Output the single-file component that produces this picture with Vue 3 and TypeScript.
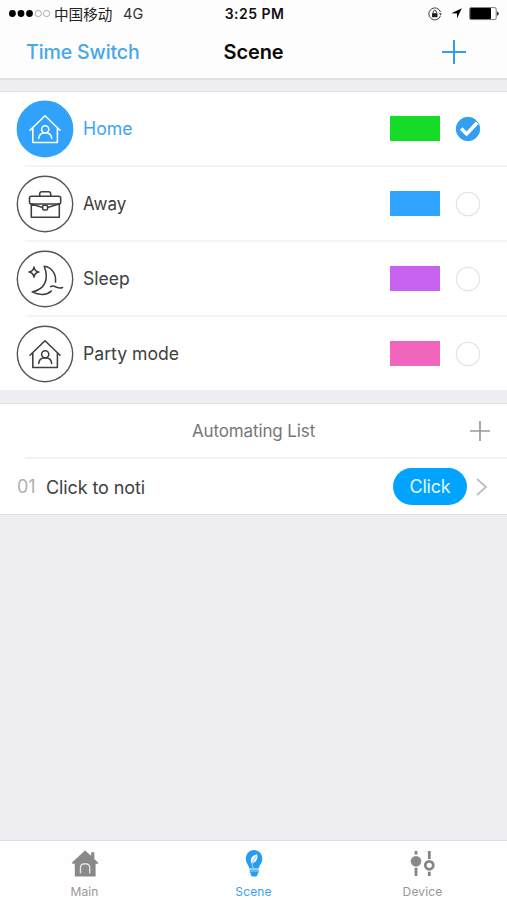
<script setup lang="ts">
import { ref } from 'vue'

type SceneIcon = 'house' | 'case' | 'moon'
interface Scene {
  name: string
  icon: SceneIcon
  color: string
  textWidth: number
}

const scenes: Scene[] = [
  { name: 'Home', icon: 'house', color: '#14dc28', textWidth: 49.5 },
  { name: 'Away', icon: 'case', color: '#30a4ff', textWidth: 43.3 },
  { name: 'Sleep', icon: 'moon', color: '#c863ef', textWidth: 46.7 },
  { name: 'Party mode', icon: 'house', color: '#f165bd', textWidth: 96 },
]
const selected = ref(0)
</script>

<template>
  <div class="screen">
    <header class="top">
      <div class="status">
        <div class="carrier">
          <svg width="42" height="10" viewBox="0 0 42 10">
            <circle cx="3.4" cy="4.5" r="3.4" />
            <circle cx="12" cy="4.5" r="3.4" />
            <circle cx="20.5" cy="4.5" r="3.4" />
            <circle cx="29.3" cy="4.5" r="3.1" class="hollow" />
            <circle cx="37.6" cy="4.5" r="3.1" class="hollow" />
          </svg>
          <span class="operator">中国移动</span>
          <span class="network">4G</span>
        </div>
        <span class="clock">3:25 PM</span>
        <div class="indicators">
          <svg width="14" height="14" viewBox="0 0 14 14" fill="none" stroke="#444">
            <path d="M12.5 8.8A6 6 0 1 1 12.5 5" />
            <path d="m11 6.2 2.7.1-1.1 2.2z" fill="#333" stroke="none" />
            <rect x="4" y="6.2" width="5.5" height="4" fill="#222" stroke="none" />
            <path d="M5.2 6.4V5a1.6 1.6 0 0 1 3.2 0v1.4" />
          </svg>
          <svg class="arrow" width="11" height="11" viewBox="0 0 11 11">
            <path d="M10.8.2 6 10.6V5.4L.4 5.2z" />
          </svg>
          <svg width="31" height="14" viewBox="0 0 31 14">
            <rect x=".6" y=".6" width="26.6" height="12" rx="1.5" fill="#fff" stroke="#555" stroke-width=".8" />
            <rect x="1.2" y="1.1" width="20.8" height="11" rx=".8" />
            <path d="M28.2 4.2q3 2.3 0 4.8z" />
          </svg>
        </div>
      </div>
      <nav class="navigation">
        <button class="switch">Time Switch</button>
        <h1>Scene</h1>
        <button class="add" aria-label="Add scene">
          <svg width="24" height="24" viewBox="0 0 24 24"><path d="M12 0v24M0 12h24" /></svg>
        </button>
      </nav>
    </header>

    <main>
      <section class="scenes">
        <div
          v-for="(scene, index) in scenes"
          :key="scene.name"
          class="scene"
          :class="{ selected: selected === index }"
          @click="selected = index"
        >
          <svg class="scene-icon" width="58" height="58" viewBox="0 0 58 58">
            <circle class="disc" cx="29" cy="29" r="27.7" />
            <g v-if="scene.icon === 'house'">
              <path d="m14 30.3 15-14.6 15 14.6M16.8 28v14.5h24.6V28" />
              <circle cx="29.2" cy="29.3" r="3.6" />
              <path d="M22.7 38.4c.4-3.8 2.7-5.7 6.5-5.7s6.1 1.9 6.5 5.7" />
            </g>
            <g v-else-if="scene.icon === 'case'">
              <rect x="13.5" y="21.2" width="31.2" height="7.7" rx="2" />
              <path d="M23.7 21v-2.1q0-2.2 2.2-2.2h6.6q2.2 0 2.2 2.2V21M15.3 29v13.2h28V29M14.5 28.7l12.2 3.7M43.8 28.7l-12.2 3.7" />
              <rect class="clasp" x="26.7" y="30.2" width="4.8" height="4.8" rx="1.3" />
            </g>
            <g v-else>
              <path d="M18 17.1q.7 4.2 4.8 4.9-4.1.8-4.8 5-.8-4.2-5-5 4.2-.7 5-4.9z" />
              <path d="M28.2 16.2c7.8.8 12.2 8.4 11.3 15.9M28.2 16.2c5 12.7 1 23.3-12.1 25.7 7.2 3.7 14.9 3.3 19.1-.8M34.6 36.6c4.2-2.5 6.5 3.2 12 .9" />
            </g>
          </svg>
          <svg class="scene-name" width="110" height="26">
            <text x="0" y="19" :textLength="scene.textWidth" lengthAdjust="spacingAndGlyphs">{{ scene.name }}</text>
          </svg>
          <span class="swatch" :style="{ backgroundColor: scene.color }" />
          <svg class="choice" width="26" height="26" viewBox="0 0 26 26">
            <circle cx="13" cy="13" r="11.7" />
            <path v-if="selected === index" d="m6.2 12.5 5.4 5.4L22.2 6.8" />
          </svg>
        </div>
      </section>

      <section class="automation">
        <div class="automation-title">
          <h2>Automating List</h2>
          <svg width="20" height="20" viewBox="0 0 20 20"><path d="M10 0v20M0 10h20" /></svg>
        </div>
        <div class="automation-item">
          <span class="number">01</span>
          <span class="description">Click to noti</span>
          <button>Click</button>
          <svg width="11" height="18" viewBox="0 0 11 18"><path d="m1 1 9 8-9 8" /></svg>
        </div>
      </section>
    </main>

    <footer>
      <div class="tab">
        <svg width="28" height="30" viewBox="0 0 28 30">
          <path class="solid" d="M14 1.5.7 13.7l1 1.1h2.1v12.7h20.8V14.8h2.2l.7-.9-4.2-4V3.3h-3.1v3.4z" />
          <path class="door" d="M9.5 24.5v-6q0-3.8 4.6-3.8t4.6 3.8v6" />
        </svg>
        <span>Main</span>
      </div>
      <div class="tab active">
        <svg width="28" height="30" viewBox="0 0 28 30">
          <path class="solid" d="M9.3 19.6c0-3-3.4-5-3.4-9.8C5.9 4.5 9.3 1 14 1s8.3 3.5 8.3 8.8c0 4.7-3.4 6.8-3.5 9.8z" />
          <path class="solid" d="M9.7 20.5h8.9v3.2l-1.3 1.1.7.7-1.8 2.1h-4l-1.9-2.2.8-.8-1.4-1z" />
          <path class="leaf" d="M17.2 5.2c-5 .9-7.7 4.4-5.8 9 5-.7 6.7-4.4 5.8-9z" />
          <path class="stem" d="M16.2 7.3 12 13.7l1.1 5.8M10 22h8" />
        </svg>
        <span>Scene</span>
      </div>
      <div class="tab">
        <svg class="sliders" width="28" height="30" viewBox="0 0 28 30">
          <path d="M7 2v3.5M7 18.8v8.1M20.3 2v8M20.3 22.8v4.1" />
          <circle class="solid" cx="7" cy="12.2" r="5.3" />
          <circle cx="20.3" cy="16.3" r="4" />
        </svg>
        <span>Device</span>
      </div>
    </footer>
  </div>
</template>

<style>
body { background: #eeedf2; }
</style>

<style scoped>
.screen {
  display: flex;
  flex-direction: column;
  width: 507px;
  height: 900px;
  overflow: hidden;
  background: #eeedf2;
  font-family: Inter, "Noto Sans CJK SC", sans-serif;
  color: #404040;
}
.screen * { box-sizing: border-box; }
button { padding: 0; border: 0; background: none; font: inherit; cursor: pointer; }
svg { display: block; flex: none; }
.top { height: 80px; background: #fdfdfd; border-bottom: 2px solid #e0e0e2; }
.status {
  display: grid;
  grid-template-columns: 1fr 80px 1fr;
  align-items: center;
  height: 27px;
  padding: 0 7px 0 9px;
}
.carrier, .indicators { display: flex; align-items: center; }
.carrier .hollow { fill: #fff; stroke: #a0a0a0; stroke-width: .9; }
.operator { width: 60px; margin-left: 3px; font: 14.6px/20px "Noto Sans CJK SC", sans-serif; color: #222; white-space: nowrap; }
.network { margin-left: 9px; font-size: 14.5px; color: #333; letter-spacing: .2px; }
.clock { text-align: center; font-size: 14px; font-weight: 600; color: #111; white-space: nowrap; letter-spacing: .45px; }
.indicators { justify-content: flex-end; }
.indicators .arrow { margin: 0 7px 0 9px; }
.navigation {
  display: grid;
  grid-template-columns: 145px 1fr 145px;
  align-items: center;
  height: 50px;
}
.switch { margin-left: 26px; text-align: left; color: #45a7ec; font-size: 19.5px; font-weight: 500; letter-spacing: -.1px; white-space: nowrap; }
h1 { margin: 0; text-align: center; color: #0a0a0a; font-size: 20px; font-weight: 600; letter-spacing: -.1px; }
.add { justify-self: start; margin-left: 80px; }
.add path { stroke: #369fe4; stroke-width: 2; fill: none; }
main { flex: 1; padding-top: 11px; }
.scenes { height: 299px; background: #fff; border-top: 1px solid #e3e3e6; }
.scene { position: relative; display: flex; align-items: center; height: 75px; padding: 0 26px 2px 16px; }
.scene:last-child { height: 73px; padding-bottom: 0; }
.scene:not(:last-child)::after { content: ''; position: absolute; right: 0; bottom: 0; left: 25px; height: 2px; background: #f5f5f5; }
.scene-icon { fill: none; stroke: #3e3e3e; stroke-width: 1.55; stroke-linecap: round; stroke-linejoin: round; }
.scene-icon .disc { stroke: #555; stroke-width: 1.4; }
.clasp { fill: #fff; }
.selected .scene-icon { stroke: #fff; }
.selected .disc { fill: #30a2fc; stroke: #30a2fc; }
.scene-name { margin-left: 9px; overflow: visible; }
.scene-name text { font-size: 18px; fill: #404040; }
.selected .scene-name text { fill: #3da4f2; }
.swatch { width: 50px; height: 25px; margin-left: auto; }
.choice { margin-left: 15px; fill: #fff; stroke: #e4e4e5; stroke-width: 1.2; }
.selected .choice { fill: none; stroke: #fff; stroke-width: 3.6; }
.selected .choice circle { fill: #329ff0; stroke: #329ff0; stroke-width: 1; }
.automation { height: 112px; margin-top: 13px; background: #fff; border-top: 1px solid #e3e3e6; border-bottom: 1px solid #dfdfe2; }
.automation-title { position: relative; display: grid; grid-template-columns: 1fr 36px; align-items: center; height: 55px; padding: 0 0 2px 36px; }
.automation-title::after { content: ''; position: absolute; right: 0; bottom: 0; left: 25px; height: 2px; background: #f2f2f2; }
h2 { margin: 0; color: #777; font-size: 17px; font-weight: 400; text-align: center; letter-spacing: -.12px; }
.automation-title svg { fill: none; stroke: #999; stroke-width: 1.7; margin-left: -1px; }
.automation-item { display: flex; align-items: center; height: 55px; padding: 0 19px 0 17px; font-size: 18px; }
.number { width: 29px; color: #b0b0b0; font-size: 18px; }
.description { padding-top: 1px; letter-spacing: -.1px; }
.automation-item button { width: 74px; height: 37px; margin-left: auto; border-radius: 19px; background: #00a4ff; color: #e4f6ff; font-size: 18px; letter-spacing: -.2px; }
.automation-item svg { margin-left: 9px; margin-right: 1px; fill: none; stroke: #bdbdbd; stroke-width: 1.7; }
footer { display: grid; grid-template-columns: repeat(3, 1fr); height: 60px; background: #fefefe; border-top: 1px solid #dedee1; }
.tab { display: flex; flex-direction: column; align-items: center; padding-top: 8px; color: #999; font-size: 12px; line-height: 18px; letter-spacing: .15px; }
.tab span { margin-top: 4px; }
.tab .solid { fill: #898989; stroke: none; }
.door { fill: none; stroke: #e2e2e2; stroke-width: 1.4; }
.tab.active { color: #3aa1ed; }
.tab.active .solid { fill: #269df0; }
.leaf { fill: #fff; }
.stem { fill: none; stroke: #93d0fa; stroke-width: 1.1; }
.sliders { fill: none; stroke: #858585; stroke-width: 2.8; }
</style>
